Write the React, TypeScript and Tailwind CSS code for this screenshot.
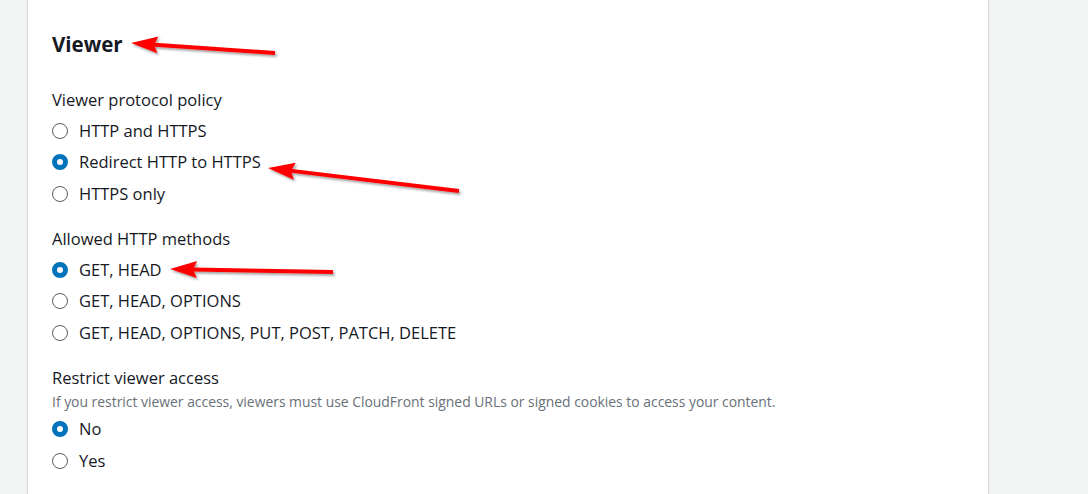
import React from "react";

type Opt = { label: string; checked?: boolean };

const Radio = ({ checked }: { checked?: boolean }) =>
  checked ? (
    <span className="w-[16px] h-[16px] rounded-full border-[5px] border-[#0073bb] bg-white shrink-0" />
  ) : (
    <span className="w-[16px] h-[16px] rounded-full border-[1.5px] border-[#545b64] bg-white shrink-0" />
  );

const Group = ({ options }: { options: Opt[] }) => (
  <div className="flex flex-col">
    {options.map((o) => (
      <div key={o.label} className="h-[31.5px] flex items-center gap-[11px]">
        <Radio checked={o.checked} />
        <span className="text-[16.5px] text-[#16191f] leading-[22px]">{o.label}</span>
      </div>
    ))}
  </div>
);

// red annotation arrow, tail -> tip
const Arrow = ({ x1, y1, x2, y2 }: { x1: number; y1: number; x2: number; y2: number }) => {
  const dx = x2 - x1;
  const dy = y2 - y1;
  const len = Math.hypot(dx, dy);
  const ux = dx / len;
  const uy = dy / len;
  const nx = -uy;
  const ny = ux;
  const head = 24;
  const hw = 8.5;
  const sw = 2;
  const bx = x2 - ux * head;
  const by = y2 - uy * head;
  const pts = [
    [x1 + nx * sw, y1 + ny * sw],
    [bx + nx * sw, by + ny * sw],
    [bx + nx * hw - ux * 3, by + ny * hw - uy * 3],
    [x2, y2],
    [bx - nx * hw - ux * 3, by - ny * hw - uy * 3],
    [bx - nx * sw, by - ny * sw],
    [x1 - nx * sw, y1 - ny * sw],
  ]
    .map((p) => p.join(","))
    .join(" ");
  return <polygon points={pts} fill="#ff0000" filter="url(#shadow)" />;
};

export default function App() {
  return (
    <div
      className="relative w-[1088px] h-[494px] overflow-hidden bg-[#f2f3f3] flex"
      style={{ fontFamily: '"Open Sans", Arial, sans-serif' }}
    >
      <div className="w-[27px] shrink-0" />
      <div className="w-[962px] shrink-0 bg-white border-x border-[#d5dbdb] pl-[24px] pt-[30px]">
        <h2 className="text-[20.5px] font-bold text-[#16191f] leading-[28px]">Viewer</h2>

        <div className="mt-[31px] text-[16.5px] text-[#16191f] leading-[22px]">Viewer protocol policy</div>
        <div className="mt-[4px]">
          <Group
            options={[
              { label: "HTTP and HTTPS" },
              { label: "Redirect HTTP to HTTPS", checked: true },
              { label: "HTTPS only" },
            ]}
          />
        </div>

        <div className="mt-[18.5px] text-[16.5px] text-[#16191f] leading-[22px]">Allowed HTTP methods</div>
        <div className="mt-[4px]">
          <Group
            options={[
              { label: "GET, HEAD", checked: true },
              { label: "GET, HEAD, OPTIONS" },
              { label: "GET, HEAD, OPTIONS, PUT, POST, PATCH, DELETE" },
            ]}
          />
        </div>

        <div className="mt-[18.5px] text-[16.5px] text-[#16191f] leading-[22px]">Restrict viewer access</div>
        <div className="mt-[4px] text-[13.9px] text-[#687078] leading-[18px]">
          If you restrict viewer access, viewers must use CloudFront signed URLs or signed cookies to access your content.
        </div>
        <div className="mt-[2.25px]">
          <Group options={[{ label: "No", checked: true }, { label: "Yes" }]} />
        </div>
      </div>

      <svg className="absolute inset-0 pointer-events-none" width="1088" height="494">
        <defs>
          <filter id="shadow" x="-10%" y="-50%" width="120%" height="200%">
            <feDropShadow dx="1.5" dy="2" stdDeviation="1.2" floodColor="#000" floodOpacity="0.35" />
          </filter>
        </defs>
        <Arrow x1={275} y1={53} x2={131} y2={43} />
        <Arrow x1={459} y1={191} x2={268} y2={168} />
        <Arrow x1={333} y1={272} x2={170} y2={269} />
      </svg>
    </div>
  );
}
